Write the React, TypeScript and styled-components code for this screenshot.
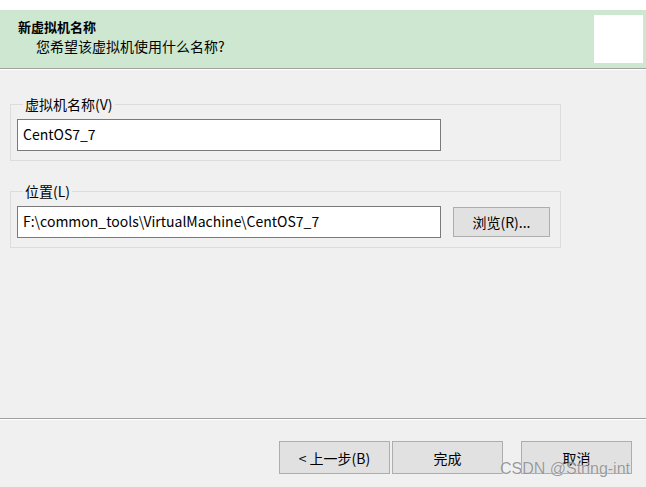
import { createGlobalStyle, styled } from 'styled-components';

const Global = createGlobalStyle`
  html, body { margin: 0; padding: 0; background: #f0f0f0; }
  body { font-family: "Noto Sans CJK SC", "Noto Sans", sans-serif; font-size: 14px; color: #000; }
`;

const Page = styled.div`
  width: 646px;
  height: 487px;
  display: flex;
  flex-direction: column;
  background: #f0f0f0;
  position: relative;
  overflow: hidden;
`;

const TopStrip = styled.div`
  height: 10px;
  background: #fff;
`;

const Header = styled.div`
  height: 58px;
  background: #cde7d0;
  border-bottom: 1px solid #a0a0a0;
  box-shadow: 0 1px 0 #fff;
  display: flex;
  justify-content: space-between;
  align-items: center;
  padding: 0 3px 0 18px;
`;

const Titles = styled.div`
  display: flex;
  flex-direction: column;
  gap: 1px;
  margin-top: -6px;
`;

const Title = styled.div`
  font-weight: bold;
  font-size: 13px;
  line-height: 18px;
`;

const Subtitle = styled.div`
  padding-left: 18px;
  font-size: 14px;
  line-height: 18px;
`;

const Logo = styled.div`
  width: 49px;
  height: 48px;
  background: #fff;
`;

const Body = styled.div`
  flex: 1;
  display: flex;
  flex-direction: column;
  gap: 22px;
  padding: 27px 0 0 10px;
`;

const Group = styled.fieldset`
  width: 551px;
  box-sizing: border-box;
  margin: 0;
  border: 1px solid #dcdcdc;
  padding: 7px 0 9px 6px;
  display: flex;
  align-items: center;
  gap: 12px;
`;

const Legend = styled.legend`
  padding: 0 2px;
  margin-left: 6px;
  font-size: 14px;
  line-height: 16px;
`;

const Input = styled.div`
  width: 424px;
  height: 32px;
  box-sizing: border-box;
  background: #fff;
  border: 1px solid #7a7a7a;
  padding: 0 5px 3px;
  display: flex;
  align-items: center;
  font-size: 14px;
`;

const Button = styled.div<{ $w?: number; $h?: number }>`
  width: ${p => p.$w ?? 111}px;
  height: ${p => p.$h ?? 33}px;
  box-sizing: border-box;
  background: #e1e1e1;
  border: 1px solid #adadad;
  display: flex;
  align-items: center;
  justify-content: center;
  font-size: 14px;
`;

const Footer = styled.div`
  height: 69px;
  border-top: 1px solid #a0a0a0;
  box-shadow: inset 0 1px 0 #fff;
  display: flex;
  align-items: flex-start;
  padding: 22px 0 0 279px;
  box-sizing: border-box;
  gap: 2px;
`;

const Watermark = styled.div`
  position: absolute;
  right: 16px;
  bottom: 9px;
  font-family: "Liberation Sans", Arial, sans-serif;
  font-size: 16px;
  color: rgba(120, 120, 120, 0.75);
  text-shadow: 0 0 1px #fff;
`;

export default function App() {
  return (
    <Page>
      <Global />
      <TopStrip />
      <Header>
        <Titles>
          <Title>新虚拟机名称</Title>
          <Subtitle>您希望该虚拟机使用什么名称?</Subtitle>
        </Titles>
        <Logo />
      </Header>
      <Body>
        <Group>
          <Legend>虚拟机名称(V)</Legend>
          <Input>CentOS7_7</Input>
        </Group>
        <Group>
          <Legend>位置(L)</Legend>
          <Input>F:\common_tools\VirtualMachine\CentOS7_7</Input>
          <Button $w={97} $h={30}>浏览(R)...</Button>
        </Group>
      </Body>
      <Footer>
        <Button>&lt; 上一步(B)</Button>
        <Button>完成</Button>
        <Button style={{ marginLeft: 16 }}>取消</Button>
      </Footer>
      <Watermark>CSDN @String-int</Watermark>
    </Page>
  );
}
